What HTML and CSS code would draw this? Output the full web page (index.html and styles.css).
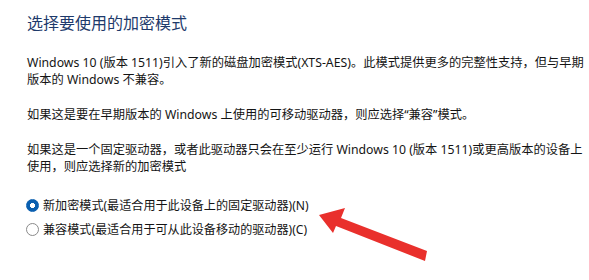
FILE: index.html
```html
<!DOCTYPE html>
<html lang="zh-CN">
<head>
<meta charset="utf-8">
<link rel="stylesheet" href="styles.css">
</head>
<body>
<div class="page">
  <h1 class="title">选择要使用的加密模式</h1>
  <p class="para">Windows 10 (版本 1511)引入了新的磁盘加密模式(XTS-AES)。此模式提供更多的完整性支持，但与早期<br>版本的 Windows 不兼容。</p>
  <p class="para">如果这是要在早期版本的 Windows 上使用的可移动驱动器，则应选择“兼容”模式。</p>
  <p class="para">如果这是一个固定驱动器，或者此驱动器只会在至少运行 Windows 10 (版本 1511)或更高版本的设备上<br>使用，则应选择新的加密模式</p>
  <div class="options">
    <div class="option"><span class="radio checked"></span><span class="label">新加密模式(最适合用于此设备上的固定驱动器)(N)</span></div>
    <div class="option"><span class="radio"></span><span class="label">兼容模式(最适合用于可从此设备移动的驱动器)(C)</span></div>
  </div>
</div>
<svg class="arrow" width="589" height="280" viewBox="0 0 589 280">
  <polygon points="319,215 345,208 341,218 427,251 425,261 336,226 333,233" fill="#e9302c"/>
</svg>
</body>
</html>
```
FILE: styles.css
```css
html, body {
  margin: 0;
  padding: 0;
  background: #ffffff;
}
body {
  width: 589px;
  height: 280px;
  overflow: hidden;
  position: relative;
  font-family: "Segoe UI", "Noto Sans", "Noto Sans CJK SC", sans-serif;
  color: #141414;
}
.page {
  padding: 13px 0 0 27px;
}
.title {
  margin: 0 0 21px 0;
  font-size: 16px;
  font-weight: normal;
  line-height: 20px;
  color: #1e3a6b;
}
.para {
  margin: 0 0 18px 0;
  font-size: 12.25px;
  line-height: 17px;
  white-space: nowrap;
}
.options {
  margin-top: 21px;
  display: flex;
  flex-direction: column;
  gap: 6px;
}
.option {
  display: flex;
  align-items: center;
  height: 18px;
  font-size: 12.1px;
  margin-left: -1px;
}
.radio {
  width: 11px;
  height: 11px;
  border-radius: 50%;
  border: 1px solid #8a8a8a;
  background: #fff;
  margin-right: 4px;
  box-sizing: content-box;
  flex: none;
}
.radio.checked {
  border-color: #0a5fb0;
  background: radial-gradient(circle, #ffffff 0 2.3px, #0a5fb0 2.8px);
}
.arrow {
  position: absolute;
  left: 0;
  top: 0;
}
```
